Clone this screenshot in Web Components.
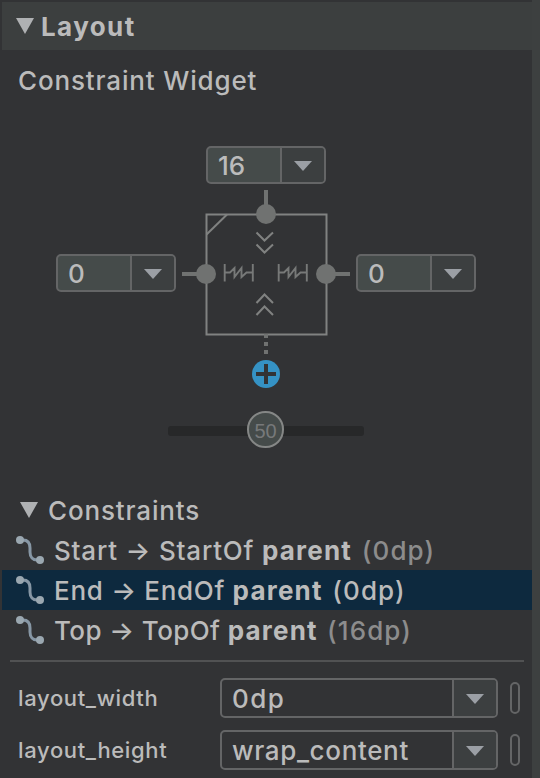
<!DOCTYPE html>
<html lang="en">
<head>
<meta charset="utf-8">
<title>Layout</title>
<style>
  body {
    margin: 0;
    background: #323335;
    color: #bbbbbb;
    font: 450 26px/40px Inter, "Liberation Sans", sans-serif;
  }
</style>
</head>
<body>
<attributes-panel>
  <panel-header slot="header">Layout</panel-header>
  <constraint-widget></constraint-widget>
  <constraint-list>
    <constraint-row from="Start" to="StartOf" margin="(0dp)" style="--fit: 0.8px">parent</constraint-row>
    <constraint-row from="End" to="EndOf" margin="(0dp)" selected>parent</constraint-row>
    <constraint-row from="Top" to="TopOf" margin="(16dp)" style="--fit: 0.4px">parent</constraint-row>
  </constraint-list>
  <attribute-row name="layout_width" style="--fit: 1.4px">0dp</attribute-row>
  <attribute-row name="layout_height">wrap_content</attribute-row>
</attributes-panel>

<script>
class AttributesPanel extends HTMLElement {
  constructor() {
    super();
    this.attachShadow({ mode: "open" });
    this.shadowRoot.innerHTML = `
      <style>
        :host {
          display: flex;
          flex-direction: column;
          box-sizing: border-box;
          height: 778px;
          padding: 2px 0 0 2px;
          border-right: 8px solid #3d4040;
          overflow: hidden;
        }
        ::slotted(*) {
          flex: none;
        }
      </style>
      <slot name="header"></slot>
      <slot></slot>
    `;
  }
}

class PanelHeader extends HTMLElement {
  constructor() {
    super();
    this.attachShadow({ mode: "open" });
    this.shadowRoot.innerHTML = `
      <style>
        :host {
          display: flex;
          align-items: center;
          gap: 7px;
          height: 48px;
          padding-left: 14px;
          background: #3c3f3f;
          font-weight: 700;
          letter-spacing: 1.4px;
        }
        svg {
          fill: #afb1b3;
        }
        span {
          padding-top: 2px;
        }
      </style>
      <svg width="18" height="16"><path d="M0 0H18L9 16Z"/></svg>
      <span><slot></slot></span>
    `;
  }
}

// editable value with a drop down button
class ComboBox extends HTMLElement {
  constructor() {
    super();
    this.attachShadow({ mode: "open" });
    this.shadowRoot.innerHTML = `
      <style>
        :host {
          display: flex;
          box-sizing: border-box;
          width: 120px;
          height: 38px;
          border: 2px solid #646566;
          border-radius: 5px;
          background: #454b4a;
          overflow: hidden;
        }
        #value {
          flex: 1;
          padding-left: 10px;
          line-height: var(--line, 36px);
          white-space: nowrap;
        }
        #button {
          display: flex;
          align-items: center;
          justify-content: center;
          width: 42px;
          border-left: 2px solid #646566;
          background: #3c3f40;
          fill: #9b9fa5;
        }
        svg {
          padding-top: 2px;
        }
      </style>
      <div id="value"><slot></slot></div>
      <div id="button"><svg width="18" height="10"><path d="M0 0H18L9 10Z"/></svg></div>
    `;
  }
}

class ConstraintWidget extends HTMLElement {
  constructor() {
    super();
    this.attachShadow({ mode: "open" });
    this.shadowRoot.innerHTML = `
      <style>
        :host {
          display: flex;
          flex-direction: column;
          height: 440px;
        }
        h2 {
          margin: 11px 0 45px 16px;
          font-size: 26px;
          font-weight: inherit;
          line-height: 40px;
          letter-spacing: 0.85px;
        }
        #margins {
          display: grid;
          grid-template-columns: 120px 180px 120px;
          grid-template-rows: 38px 204px;
          padding: 0 54px;
          justify-items: center;
        }
        #top {
          grid-column: 2;
        }
        #left {
          grid-column: 1;
          grid-row: 2;
          margin-top: 70px;
        }
        #right {
          grid-column: 3;
          grid-row: 2;
          margin-top: 70px;
        }
        #view {
          grid-column: 2;
          grid-row: 2;
        }
        #bias {
          display: flex;
          align-items: center;
          justify-content: center;
          width: 196px;
          height: 10px;
          margin: 38px 0 0 166px;
          border-radius: 3px;
          background: #272829;
        }
        #knob {
          flex: none;
          box-sizing: border-box;
          width: 36.5px;
          height: 36.5px;
          margin: -3px 1px 0 0;
          border: 2px solid #858786;
          border-radius: 50%;
          background: #454b4a;
          color: #77797a;
          font: 20px/36px "Liberation Sans", Arial, sans-serif;
          text-align: center;
        }
      </style>
      <h2>Constraint Widget</h2>
      <div id="margins">
        <combo-box id="top">16</combo-box>
        <combo-box id="left">0</combo-box>
        <svg id="view" width="180" height="204" viewBox="176 184 180 204" fill="none" stroke="#808281" stroke-width="2">
          <rect x="206.5" y="214.5" width="120" height="120"/>
          <path d="M206.5 234.500L227 214.500" stroke-width="2"/>
          <g stroke="#707271" stroke-width="4">
            <path d="M266 190V214M182 274H206M326 274H350"/>
            <path d="M266 334V354" stroke-dasharray="4"/>
          </g>
          <g fill="#707271" stroke="none">
            <circle cx="266" cy="214" r="10"/>
            <circle cx="206" cy="274" r="10"/>
            <circle cx="326" cy="274" r="10"/>
          </g>
          <path d="M256.500 232.500L264.500 240.500L273 232.500M256.500 244.500L264.500 252.500L273 244.500"/>
          <path d="M256.500 303L264.500 294.500L273 303M256.500 315L264.500 306.500L273 315"/>
          <g id="springs" stroke-width="1.900" stroke="#777978">
            <path d="M224.700 264V281.500M252.800 264V281.500M225 272.500H230L234.500 268V277L241.500 268V277L246.500 272.500H253"/>
            <path d="M278.700 264V281.500M306.800 264V281.500M279 272.500H284L288.500 268V277L295.500 268V277L300.500 272.500H307"/>
          </g>
          <circle cx="266" cy="374" r="14" fill="#3592c4" stroke="none"/>
          <path d="M256 374H276M266 364V384" stroke="#323335" stroke-width="4"/>
        </svg>
        <combo-box id="right">0</combo-box>
      </div>
      <div id="bias"><div id="knob">50</div></div>
    `;
  }
}

class ConstraintList extends HTMLElement {
  constructor() {
    super();
    this.attachShadow({ mode: "open" });
    this.shadowRoot.innerHTML = `
      <style>
        :host {
          display: block;
        }
        header {
          display: flex;
          align-items: center;
          gap: 10px;
          height: 40px;
          padding-left: 18px;
          letter-spacing: 0.85px;
        }
        svg {
          fill: #afb1b3;
        }
        span {
          padding-top: 2px;
        }
        hr {
          height: 2px;
          margin: 10px 8px 16px;
          border: 0;
          background: #515253;
        }
      </style>
      <header><svg width="18" height="16"><path d="M0 0H18L9 16Z"/></svg><span>Constraints</span></header>
      <slot></slot>
      <hr>
    `;
  }
}

class ConstraintRow extends HTMLElement {
  constructor() {
    super();
    this.attachShadow({ mode: "open" });
    this.shadowRoot.innerHTML = `
      <style>
        :host {
          display: flex;
          align-items: center;
          height: 40px;
          padding-left: 14px;
          letter-spacing: var(--fit, 0.7px);
          white-space: pre;
        }
        :host([selected]) {
          background: #0d293e;
        }
        svg {
          margin-right: 10px;
        }
        #text {
          padding-top: 2px;
        }
        b {
          font-weight: 700;
          letter-spacing: 1.2px;
        }
        #margin {
          margin-left: 2px;
          color: #8c8c8c;
          letter-spacing: 1.1px;
        }
        :host([selected]) #margin {
          color: inherit;
        }
      </style>
      <svg width="28" height="28" viewBox="0 0 28 28">
        <path d="M4 4H7C12 4 14 7 14 12V16C14 21 17 24 21 24H24" fill="none" stroke="#8797a5" stroke-width="3"/>
        <circle cx="4" cy="4" r="4" fill="#9aa7b0"/>
        <circle cx="24" cy="24" r="4" fill="#9aa7b0"/>
      </svg>
      <span id="text"><span id="from"></span> → <span id="to"></span> <b><slot></slot></b> <span id="margin"></span></span>
    `;
  }

  connectedCallback() {
    ["from", "to", "margin"].forEach((name) => {
      this.shadowRoot.getElementById(name).textContent = this.getAttribute(name);
    });
  }
}

class AttributeRow extends HTMLElement {
  constructor() {
    super();
    this.attachShadow({ mode: "open" });
    this.shadowRoot.innerHTML = `
      <style>
        :host {
          display: flex;
          align-items: center;
          height: 40px;
          margin-bottom: 12px;
          padding-left: 16px;
        }
        label {
          width: 202px;
          font-size: 22px;
          letter-spacing: 0.65px;
        }
        combo-box {
          --line: 38px;
          width: 278px;
          height: 40px;
          background: #323335;
          letter-spacing: var(--fit, 0.65px);
        }
        #flag {
          box-sizing: border-box;
          width: 10px;
          height: 32px;
          margin-left: 12px;
          border: 2px solid #646566;
          border-radius: 5px;
        }
      </style>
      <label></label>
      <combo-box><slot></slot></combo-box>
      <div id="flag"></div>
    `;
  }

  connectedCallback() {
    this.shadowRoot.querySelector("label").textContent = this.getAttribute("name");
  }
}

customElements.define("combo-box", ComboBox);
customElements.define("panel-header", PanelHeader);
customElements.define("constraint-widget", ConstraintWidget);
customElements.define("constraint-row", ConstraintRow);
customElements.define("constraint-list", ConstraintList);
customElements.define("attribute-row", AttributeRow);
customElements.define("attributes-panel", AttributesPanel);
</script>
</body>
</html>
